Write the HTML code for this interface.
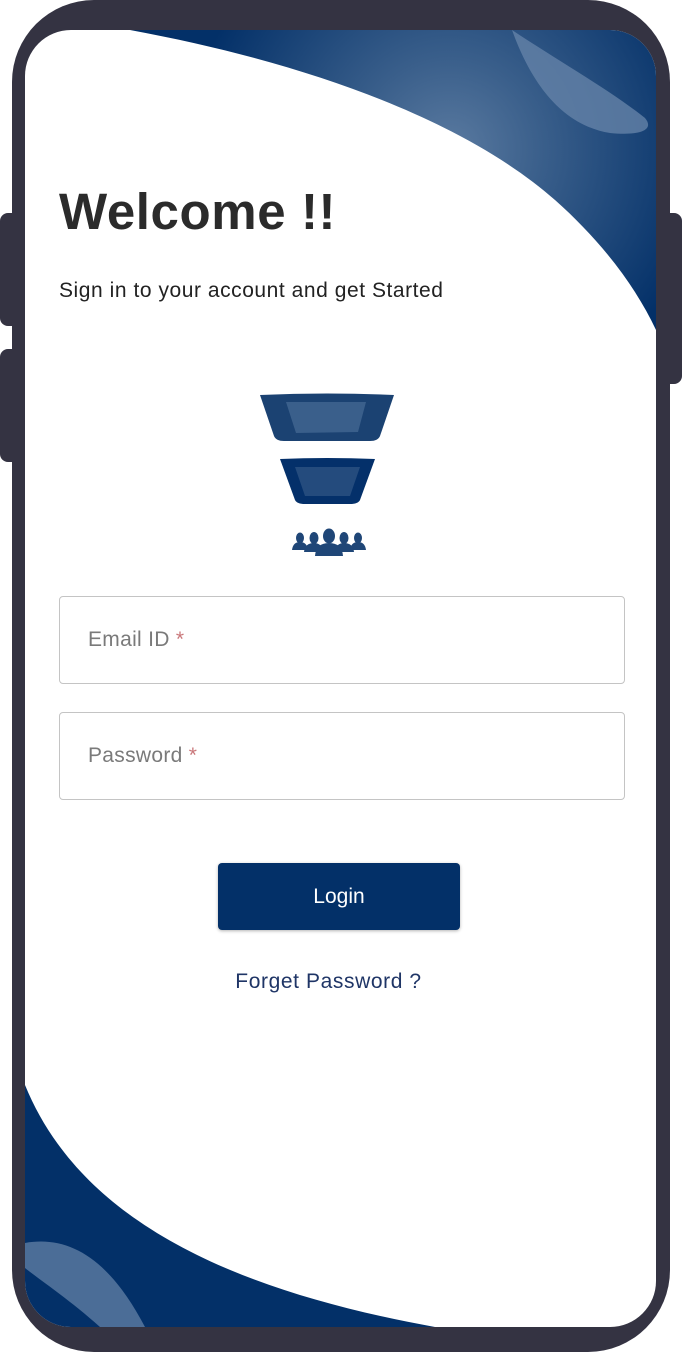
<!DOCTYPE html>
<html><head><meta charset="utf-8"><style>
html,body{margin:0;padding:0;width:682px;height:1352px;overflow:hidden;background:#fff;font-family:"Liberation Sans",sans-serif}
.abs{position:absolute}
.field{position:absolute;left:59px;width:566px;height:88px;border:1px solid #c4c4c4;border-radius:4px;box-sizing:border-box;background:#fff}
.field span{position:absolute;left:28px;top:31px;font-size:21px;color:#7a7a7a;letter-spacing:0.3px}
.field b{color:#c9777a;font-weight:normal}
</style></head><body>
<svg class="abs" style="left:0;top:0" width="682" height="1352" viewBox="0 0 682 1352">
<defs>
<radialGradient id="g" gradientUnits="userSpaceOnUse" cx="450" cy="150" r="260">
<stop offset="0" stop-color="#5a7aa0"/><stop offset="0.35" stop-color="#3a5f8b"/><stop offset="1" stop-color="#033068"/>
</radialGradient>
<clipPath id="scr"><rect x="25" y="30" width="631" height="1297" rx="46"/></clipPath>
</defs>
<rect x="0" y="213" width="20" height="113" rx="8" fill="#343342"/>
<rect x="0" y="349" width="20" height="113" rx="8" fill="#343342"/>
<rect x="662" y="213" width="20" height="171" rx="8" fill="#343342"/>
<rect x="12" y="0" width="658" height="1352" rx="82" fill="#343342"/>
<rect x="25" y="30" width="631" height="1297" rx="46" fill="#fff"/>
<g clip-path="url(#scr)">
<path d="M130 30 C320 65 470 125 555 200 C600 240 635 285 656 330 L656 30 Z" fill="url(#g)"/>
<path d="M512 30 C530 80 560 125 610 133 C640 136 655 130 645 118 C610 90 560 62 512 30 Z" fill="#6482a8" opacity="0.8"/>
<path d="M25 1085 C80 1220 230 1290 435 1327 L25 1327 Z" fill="#033068"/>
<path d="M25 1243 C70 1235 110 1260 145 1327 L100 1327 C70 1300 40 1280 25 1268 Z" fill="#5878a0" opacity="0.85"/>
</g>
<path d="M260 395 Q327 392 394 395 L380 436 Q378 441 370 441 L284 441 Q276 441 274 436 Z" fill="#1b4272"/>
<path d="M286 402 L366 402 L358 432 L296 433 Z" fill="#3a5f8b"/>
<path d="M280 459 Q327 457 375 459 L360 500 Q358 504 350 504 L305 504 Q297 504 295 500 Z" fill="#04306a"/>
<path d="M295 467 L360 467 L350 496 L305 496 Z" fill="#244b7d"/>
<g fill="#1f4677">
<ellipse cx="329" cy="536" rx="6" ry="7.5"/><path d="M315 556 Q316 543 329 543 Q342 543 343 556 Z"/>
<ellipse cx="314" cy="538" rx="4.5" ry="6"/><path d="M304 552 Q305 543 314 543 Q322 543 323 552 Z"/>
<ellipse cx="344" cy="538" rx="4.5" ry="6"/><path d="M335 552 Q336 543 344 543 Q353 543 354 552 Z"/>
<ellipse cx="300" cy="538" rx="4" ry="5.5"/><path d="M292 550 Q293 542 300 542 Q307 542 308 550 Z"/>
<ellipse cx="358" cy="538" rx="4" ry="5.5"/><path d="M350 550 Q351 542 358 542 Q365 542 366 550 Z"/>
</g>
</svg>
<div class="abs" style="left:59px;top:182px;font-size:51px;font-weight:bold;color:#2b2b2b;letter-spacing:0.6px">Welcome !!</div>
<div class="abs" style="left:59px;top:279px;font-size:21px;color:#222;letter-spacing:0.55px">Sign in to your account and get Started</div>
<div class="field" style="top:596px"><span>Email ID <b>*</b></span></div>
<div class="field" style="top:712px"><span>Password <b>*</b></span></div>
<div class="abs" style="left:218px;top:863px;width:242px;height:67px;background:#033068;border-radius:4px;color:#fff;font-size:21px;text-align:center;line-height:67px;box-shadow:0 1px 3px rgba(0,0,0,.3)">Login</div>
<div class="abs" style="left:0;width:657px;top:970px;text-align:center;font-size:21px;color:#1f3566;letter-spacing:0.6px">Forget Password ?</div>
</body></html>
